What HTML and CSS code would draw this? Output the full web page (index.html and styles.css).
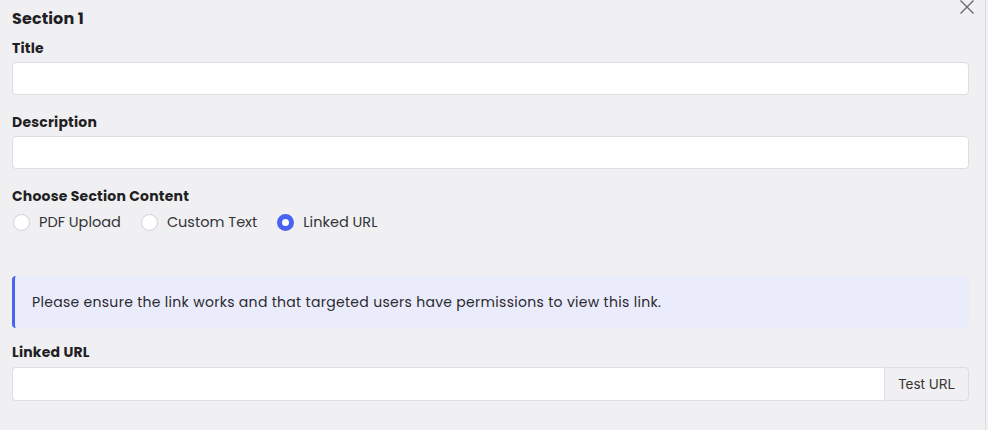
FILE: index.html
```html
<!DOCTYPE html>
<html>
<head>
<meta charset="utf-8">
<link rel="stylesheet" href="styles.css">
</head>
<body>
<div class="panel">
  <button class="close" aria-label="Close">
    <svg width="16" height="16" viewBox="0 0 16 16"><path d="M1.5 1.5 L14.5 14.5 M14.5 1.5 L1.5 14.5" stroke="#6b6b6e" stroke-width="1.4" fill="none"/></svg>
  </button>
  <h2 class="heading">Section 1</h2>
  <div class="field">
    <label class="label">Title</label>
    <input class="input" type="text">
  </div>
  <div class="field">
    <label class="label">Description</label>
    <input class="input" type="text">
  </div>
  <div class="field">
    <label class="label">Choose Section Content</label>
    <div class="radios">
      <label class="radio"><span class="dot"></span>PDF Upload</label>
      <label class="radio"><span class="dot"></span>Custom Text</label>
      <label class="radio"><span class="dot checked"></span>Linked URL</label>
    </div>
  </div>
  <div class="notice">Please ensure the link works and that targeted users have permissions to view this link.</div>
  <div class="field">
    <label class="label label-url">Linked URL</label>
    <div class="group">
      <input class="input grow" type="text">
      <button class="btn">Test URL</button>
    </div>
  </div>
</div>
</body>
</html>
```
FILE: styles.css
```css
html, body { margin: 0; padding: 0; }
body {
  background: #f0f0f2;
  font-family: "Poppins", "Lato", "Open Sans", sans-serif;
  color: #1f1f24;
  width: 988px;
  height: 430px;
  overflow: hidden;
}
.panel {
  position: relative;
  box-sizing: border-box;
  width: 986px;
  height: 430px;
  border-right: 1px solid #dcdce0;
  padding: 9px 16px 0 12px;
}
.close {
  position: absolute;
  right: 10px;
  top: -1px;
  border: 0;
  background: none;
  padding: 0;
  width: 16px;
  height: 16px;
}
.heading {
  margin: 0 0 10px;
  font-size: 16px;
  font-weight: 700;
  line-height: 20px;
  letter-spacing: 0.1px;
}
.field { display: flex; flex-direction: column; }
.label {
  font-size: 14px;
  font-weight: 700;
  line-height: 18px;
  letter-spacing: 0.2px;
  margin-bottom: 5px;
}
.label-url { margin-bottom: 6px; }
.input {
  box-sizing: border-box;
  height: 33px;
  border: 1px solid #dedee2;
  border-radius: 4px;
  background: #fff;
  margin: 0 0 18px;
  width: 100%;
  font: inherit;
}
.radios { display: flex; gap: 19px; margin-top: 2px; }
.radio {
  display: flex;
  align-items: center;
  gap: 9px;
  font-size: 14.5px;
  color: #333338;
  line-height: 20px;
}
.dot {
  box-sizing: border-box;
  width: 17px;
  height: 17px;
  border-radius: 50%;
  border: 1.5px solid #c9d0da;
  background: #fff;
  margin-left: 1px;
}
.dot.checked {
  border: 5px solid #4a62f2;
  background: #fff;
}
.notice {
  margin: 44px 0 15px;
  height: 52px;
  box-sizing: border-box;
  background: #ebecfb;
  border-left: 3px solid #4a62f2;
  border-radius: 4px;
  padding: 0 0 0 17px;
  display: flex;
  align-items: center;
  font-size: 14px;
  letter-spacing: 0.3px;
  color: #2a2a30;
}
.group { display: flex; }
.group .input { height: 34px; margin: 0; border-radius: 4px 0 0 4px; border-right: 0; }
.grow { flex: 1; }
.btn {
  box-sizing: border-box;
  height: 34px;
  width: 85px;
  flex: none;
  border: 1px solid #dedee2;
  border-radius: 0 4px 4px 0;
  background: #f0f0f2;
  font-family: "Inter", "Roboto", sans-serif;
  font-size: 13.5px;
  color: #333;
}
```
